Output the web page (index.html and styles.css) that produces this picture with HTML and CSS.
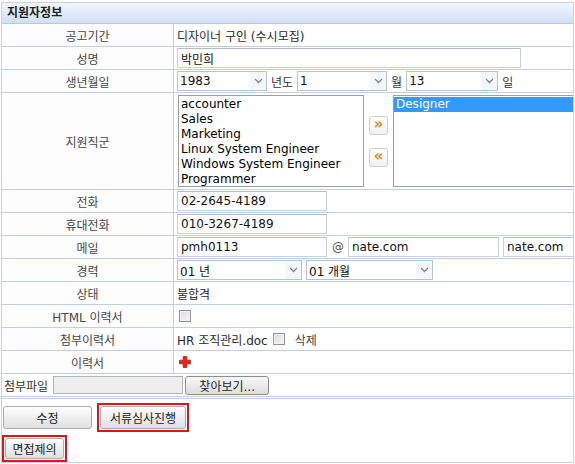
FILE: index.html
```html
<!DOCTYPE html>
<html lang="ko">
<head>
<meta charset="utf-8">
<title>지원자정보</title>
<link rel="stylesheet" href="styles.css">
</head>
<body>
<div class="panel">
  <div class="title">지원자정보</div>

  <div class="row"><div class="lbl">공고기간</div><div class="val">디자이너 구인 (수시모집)</div></div>
  <div class="row"><div class="lbl">성명</div><div class="val"><input class="in w-name" value="박민희"></div></div>
  <div class="row">
    <div class="lbl">생년월일</div>
    <div class="val">
      <div class="sel w-90"><span>1983</span><span class="arr"><svg width="9" height="6" viewBox="0 0 9 6"><path d="M1 1l3.5 3.5L8 1" fill="none" stroke="#7d8897" stroke-width="1.3"/></svg></span></div>
      <span class="t">년도</span>
      <div class="sel w-90"><span>1</span><span class="arr"><svg width="9" height="6" viewBox="0 0 9 6"><path d="M1 1l3.5 3.5L8 1" fill="none" stroke="#7d8897" stroke-width="1.3"/></svg></span></div>
      <span class="t">월</span>
      <div class="sel w-92"><span>13</span><span class="arr"><svg width="9" height="6" viewBox="0 0 9 6"><path d="M1 1l3.5 3.5L8 1" fill="none" stroke="#7d8897" stroke-width="1.3"/></svg></span></div>
      <span class="t">일</span>
    </div>
  </div>
  <div class="row tall">
    <div class="lbl">지원직군</div>
    <div class="val">
      <div class="list left">
        <div class="opt">accounter</div>
        <div class="opt">Sales</div>
        <div class="opt">Marketing</div>
        <div class="opt">Linux System Engineer</div>
        <div class="opt">Windows System Engineer</div>
        <div class="opt">Programmer</div>
      </div>
      <div class="movers">
        <span class="mv">&raquo;</span>
        <span class="mv">&laquo;</span>
      </div>
      <div class="list right">
        <div class="opt on">Designer</div>
      </div>
    </div>
  </div>
  <div class="row"><div class="lbl">전화</div><div class="val"><input class="in w-150" value="02-2645-4189"></div></div>
  <div class="row"><div class="lbl">휴대전화</div><div class="val"><input class="in w-150" value="010-3267-4189"></div></div>
  <div class="row">
    <div class="lbl">메일</div>
    <div class="val">
      <input class="in w-150" value="pmh0113">
      <span class="at">@</span>
      <input class="in w-151" value="nate.com">
      <input class="in w-100" value="nate.com">
    </div>
  </div>
  <div class="row">
    <div class="lbl">경력</div>
    <div class="val">
      <div class="sel w-125"><span>01 년</span><span class="arr"><svg width="9" height="6" viewBox="0 0 9 6"><path d="M1 1l3.5 3.5L8 1" fill="none" stroke="#7d8897" stroke-width="1.3"/></svg></span></div>
      <div class="sel w-127"><span>01 개월</span><span class="arr"><svg width="9" height="6" viewBox="0 0 9 6"><path d="M1 1l3.5 3.5L8 1" fill="none" stroke="#7d8897" stroke-width="1.3"/></svg></span></div>
    </div>
  </div>
  <div class="row"><div class="lbl">상태</div><div class="val">불합격</div></div>
  <div class="row"><div class="lbl">HTML 이력서</div><div class="val"><span class="chk"></span></div></div>
  <div class="row"><div class="lbl">첨부이력서</div><div class="val">HR 조직관리.doc <span class="chk mid"></span><span class="del">삭제</span></div></div>
  <div class="row">
    <div class="lbl">이력서</div>
    <div class="val"><svg class="plus" width="12" height="12" viewBox="0 0 12 12"><path d="M4.2 0.6h3.6v3.6h3.6v3.6H7.8v3.6H4.2V7.8H0.6V4.2h3.6z" fill="#e52420" stroke="#b51410" stroke-width="0.8" stroke-linejoin="round"/></svg></div>
  </div>
  <div class="row full">
    <span class="flabel">첨부파일</span>
    <span class="file"></span>
    <span class="browse">찾아보기...</span>
  </div>

  <div class="actions">
    <div class="line">
      <span class="btn b-edit">수정</span>
      <span class="mark"><span class="btn b-review">서류심사진행</span></span>
    </div>
    <div class="line">
      <span class="mark"><span class="btn b-int">면접제의</span></span>
    </div>
  </div>
</div>
</body>
</html>
```

FILE: styles.css
```css
body {
  margin: 0;
  background: #fff;
  font-family: "DejaVu Sans", "Noto Sans CJK KR", sans-serif;
  font-size: 12px;
  color: #333;
}

.panel {
  box-sizing: border-box;
  margin: 2px 1px 0 1px;
  height: 461px;
  border: 1px solid #d2d2d2;
  overflow: hidden;
}

.title {
  height: 20px;
  line-height: 20px;
  padding-left: 5px;
  font-weight: bold;
  color: #1e1e1e;
  background: linear-gradient(#f1f6fd, #d0e0f4);
  border-bottom: 1px solid #b4c8e2;
}

.row {
  display: grid;
  grid-template-columns: 172px 1fr;
  height: 22px;
  border-bottom: 1px solid #bfd0e6;
}

.row.tall { height: 96px; }

.lbl {
  box-sizing: border-box;
  border-right: 1px solid #bfd0e6;
  display: flex;
  align-items: center;
  justify-content: center;
  color: #474747;
  background: #fdfdfd;
}

.val {
  display: flex;
  align-items: center;
  gap: 4px;
  padding-left: 3px;
  color: #2a2a2a;
  white-space: nowrap;
}

.in {
  box-sizing: border-box;
  height: 20px;
  margin: 0;
  padding: 0 3px;
  border: 1px solid #c9d1da;
  border-top-color: #b3bdc8;
  font: inherit;
  color: #111;
  background: #fff;
  flex: none;
}

.w-name { width: 344px; }
.w-150 { width: 150px; }
.w-151 { width: 151px; }
.w-100 { width: 100px; }

.at { color: #555; margin: 0 0 0 1px; }

.sel {
  box-sizing: border-box;
  height: 20px;
  display: flex;
  align-items: center;
  justify-content: space-between;
  border: 1px solid #b9c3ce;
  background: #fff;
  color: #111;
  padding-left: 2px;
  flex: none;
}

.sel .arr {
  width: 16px;
  height: 18px;
  display: flex;
  align-items: center;
  justify-content: center;
  background: #f3f6fa;
}

.w-90 { width: 90px; }
.w-92 { width: 92px; }
.w-125 { width: 125px; }
.w-127 { width: 127px; }

.t { color: #333; }

.list {
  box-sizing: border-box;
  height: 92px;
  border: 1px solid #9e9e9e;
  background: #fff;
  padding: 1px 0;
  color: #000;
  flex: none;
}

.list.left { width: 186px; margin-left: 1px; }
.list.right { width: 200px; }

.opt {
  height: 15px;
  line-height: 15px;
  padding-left: 2px;
}

.opt.on {
  background: #3399ff;
  color: #fff;
}

.movers {
  display: flex;
  flex-direction: column;
  gap: 13px;
  margin: 0 1px;
}

.mv {
  box-sizing: border-box;
  width: 19px;
  height: 19px;
  display: flex;
  align-items: center;
  justify-content: center;
  border: 1px solid #cfcfcf;
  border-radius: 3px;
  background: linear-gradient(#ffffff, #f0f0f0);
  color: #e38a2a;
  font-weight: bold;
  font-size: 15px;
  line-height: 1;
  padding-bottom: 2px;
}

.chk {
  box-sizing: border-box;
  width: 12px;
  height: 12px;
  margin-left: 2px;
  border: 1px solid #939393;
  background: linear-gradient(135deg, #d9d9d9, #f7f7f7);
  box-shadow: inset 0 0 0 1px #f2f2f2;
  flex: none;
}

.chk.mid { margin-left: 1px; }
.del { margin-left: 6px; color: #444; }

.plus { margin-left: 2px; flex: none; }

.row.full {
  display: flex;
  align-items: center;
  height: 22px;
  padding-left: 2px;
  border-bottom: 3px double #c2d1e3;
}

.flabel { color: #333; }

.file {
  box-sizing: border-box;
  width: 130px;
  height: 18px;
  margin-left: 5px;
  border: 1px solid #b3b3b3;
  background: #eeeeee;
}

.browse {
  box-sizing: border-box;
  width: 84px;
  height: 19px;
  margin-left: 2px;
  display: flex;
  align-items: center;
  justify-content: center;
  border: 1px solid #8d8d8d;
  border-radius: 3px;
  background: linear-gradient(#f8f8f8, #dcdcdc);
  color: #222;
}

.actions {
  display: flex;
  flex-direction: column;
  gap: 3px;
  padding-top: 4px;
}

.line {
  display: flex;
  align-items: center;
  gap: 5px;
}

.btn {
  box-sizing: border-box;
  display: flex;
  align-items: center;
  justify-content: center;
  border: 1px solid #acacac;
  border-radius: 3px;
  background: linear-gradient(#fdfdfd, #e0e0e0);
  color: #222;
}

.b-edit { width: 89px; height: 23px; margin-left: 1px; }
.b-review { width: 86px; height: 23px; }
.b-int { width: 59px; height: 21px; }

.mark {
  display: flex;
  padding: 1px;
  border: 2px solid #e3121a;
}
```
